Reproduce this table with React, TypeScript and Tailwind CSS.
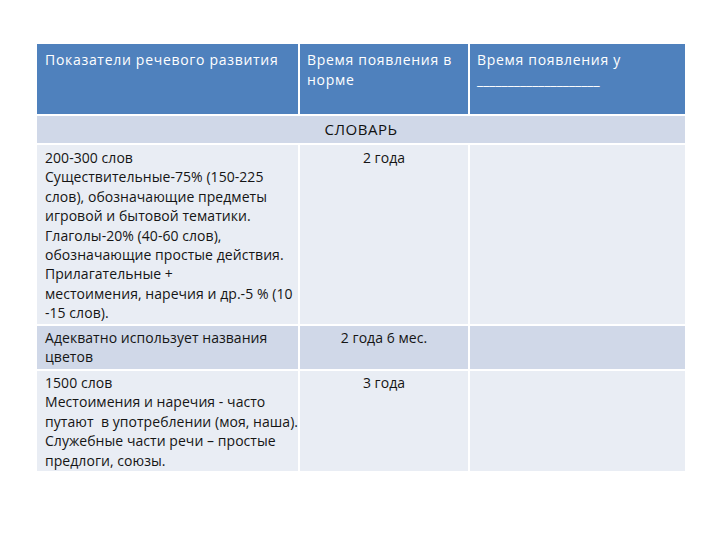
import React from "react";

const font = { fontFamily: '"Open Sans", "Liberation Sans", sans-serif' };

const body = "text-[14px] leading-[19.4px] tracking-[0.05px] text-[#151515] whitespace-nowrap";

export default function App() {
  return (
    <div className="w-[720px] h-[540px] bg-white relative" style={font}>
      <div className="pt-[44px] pl-[37px]">
        <div className="grid grid-cols-[261px_168px_215px] gap-[2px] w-[648px] bg-white">
          {/* header */}
          <div className="bg-[#4f81bd] h-[70px] pl-[8px] pt-[6px] text-white text-[14px] font-medium leading-[20px] tracking-[0.7px] whitespace-nowrap">
            Показатели речевого развития
          </div>
          <div className="bg-[#4f81bd] h-[70px] pl-[7px] pt-[6px] text-white text-[14px] font-medium leading-[20px] tracking-[0.7px] whitespace-nowrap">
            Время появления в
            <br />
            норме
          </div>
          <div className="bg-[#4f81bd] h-[70px] pl-[7px] pt-[6px] text-white text-[14px] font-medium leading-[20px] tracking-[0.7px] whitespace-nowrap">
            Время появления у
            <br />
            <span className="tracking-normal">____________________</span>
          </div>
          {/* slovar */}
          <div className="col-span-3 bg-[#d0d8e8] h-[27px] flex items-center justify-center text-[15px] font-medium tracking-[0.5px] text-[#111]">
            СЛОВАРЬ
          </div>
          {/* row 1 */}
          <div className={`bg-[#e9edf4] h-[179px] pl-[8px] pt-[3px] ${body}`}>
            200-300 слов
            <br />
            Существительные-75% (150-225
            <br />
            слов), обозначающие предметы
            <br />
            игровой и бытовой тематики.
            <br />
            Глаголы-20% (40-60 слов),
            <br />
            обозначающие простые действия.
            <br />
            Прилагательные +
            <br />
            местоимения, наречия и др.-5 % (10
            <br />
            -15 слов).
          </div>
          <div className={`bg-[#e9edf4] h-[179px] pt-[3px] text-center ${body}`}>2 года</div>
          <div className="bg-[#e9edf4] h-[179px]" />
          {/* row 2 */}
          <div className={`bg-[#d0d8e8] h-[43px] pl-[8px] pt-[2px] ${body}`}>
            Адекватно использует названия
            <br />
            цветов
          </div>
          <div className={`bg-[#d0d8e8] h-[43px] pt-[2px] text-center ${body}`}>2 года 6 мес.</div>
          <div className="bg-[#d0d8e8] h-[43px]" />
          {/* row 3 */}
          <div className={`bg-[#e9edf4] h-[100px] pl-[8px] pt-[2px] ${body}`}>
            1500 слов
            <br />
            Местоимения и наречия - часто
            <br />
            путают&nbsp; в употреблении (моя, наша).
            <br />
            Служебные части речи – простые
            <br />
            предлоги, союзы.
          </div>
          <div className={`bg-[#e9edf4] h-[100px] pt-[2px] text-center ${body}`}>3 года</div>
          <div className="bg-[#e9edf4] h-[100px]" />
        </div>
      </div>
    </div>
  );
}
